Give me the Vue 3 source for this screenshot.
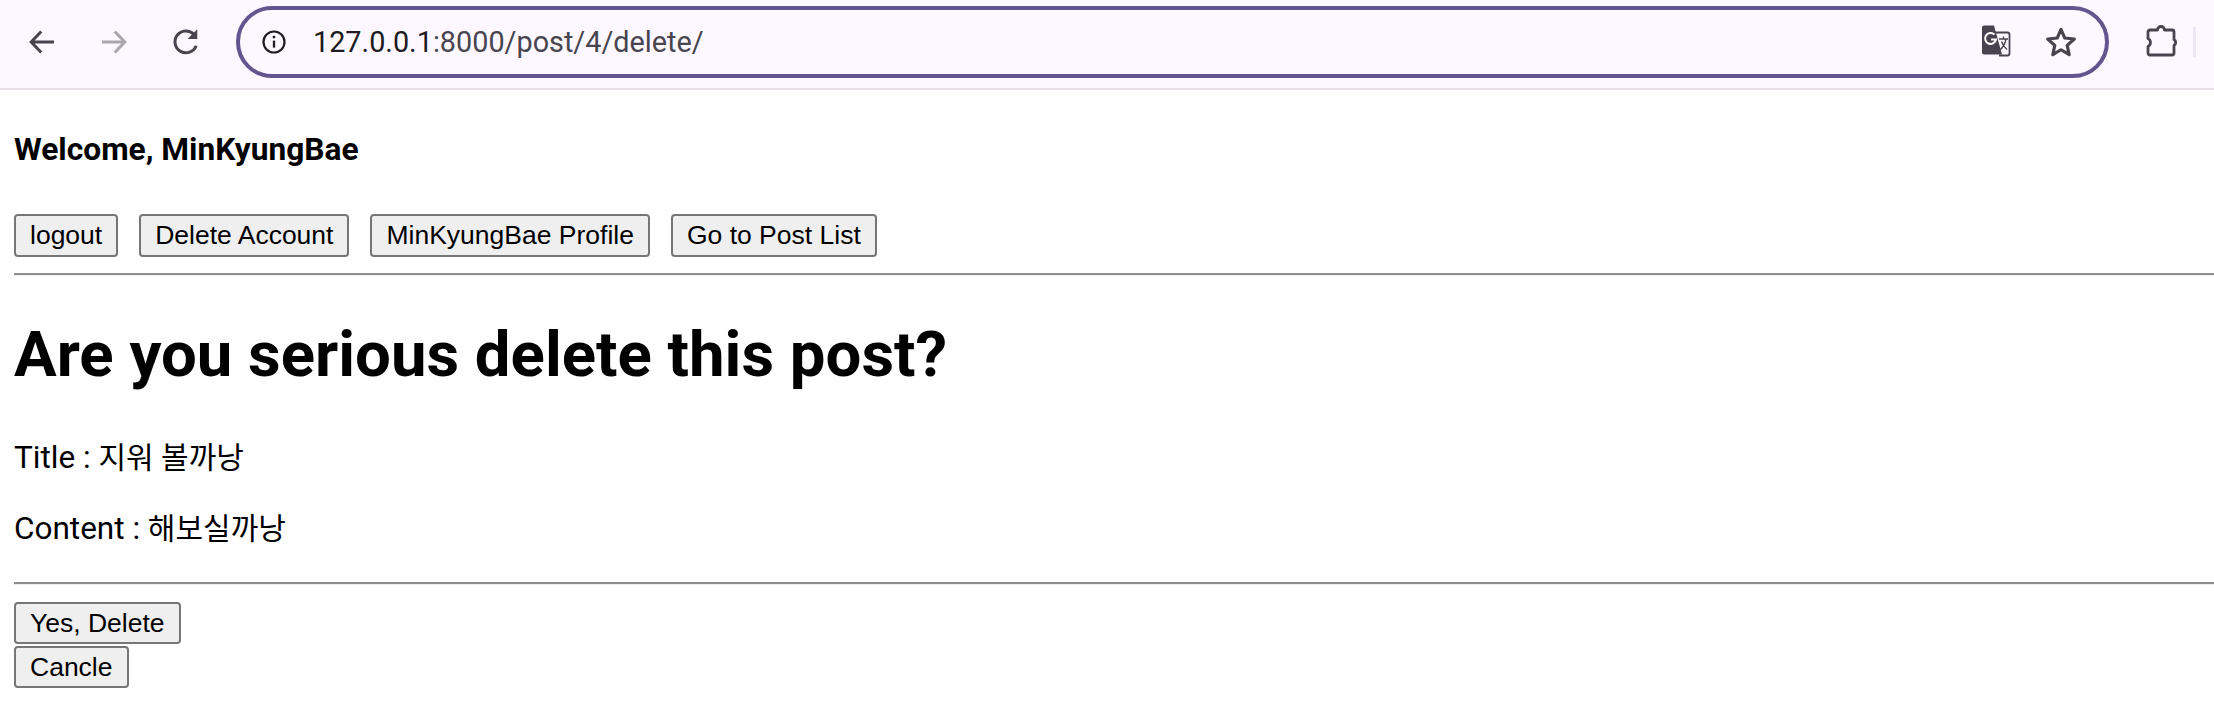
<template>
  <div class="page">
    <header class="toolbar">
      <button class="nav-btn" aria-label="Back">
        <svg width="36" height="36" viewBox="0 0 24 24"><path d="M20 12H5M11.500 5 4.800 12l6.700 7" fill="none" stroke="#47434f" stroke-width="2"/></svg>
      </button>
      <button class="nav-btn" aria-label="Forward">
        <svg width="36" height="36" viewBox="0 0 24 24"><path d="M4 12h15M12.500 5l6.700 7-6.700 7" fill="none" stroke="#a9a6ae" stroke-width="2"/></svg>
      </button>
      <button class="nav-btn" aria-label="Reload">
        <svg width="36" height="36" viewBox="0 0 24 24"><path d="M18.800 14.500A7.300 7.300 0 1 1 17.200 6.800" fill="none" stroke="#47434f" stroke-width="2"/><path d="M19.500 3.500v6.500H13z" fill="#47434f"/></svg>
      </button>
      <div class="omnibox">
        <svg class="info" width="28" height="28" viewBox="0 0 24 24"><circle cx="12" cy="12" r="9" fill="none" stroke="#1f1c26" stroke-width="1.900"/><path d="M12 10.800v6" stroke="#1f1c26" stroke-width="2"/><circle cx="12" cy="7.800" r="1.200" fill="#1f1c26"/></svg>
        <span class="url"><span class="host">127.0.0.1</span>:8000/post/4/delete/</span>
        <svg class="translate" width="36" height="36" viewBox="0 0 36 36">
          <path d="M14 8.500h14.500a2 2 0 0 1 2 2v19a2 2 0 0 1-2 2H20" fill="none" stroke="#47434f" stroke-width="1.800"/>
          <path d="M3 3.500A2 2 0 0 1 5 1.500h10l8 29H5a2 2 0 0 1-2-2z" fill="#47434f"/>
          <path d="M15.500 10.500a5.500 5.500 0 1 0 1.500 5h-5" fill="none" stroke="#fff" stroke-width="2"/>
          <path d="M20 15h9M24.500 12.500V15M27 15c-1 5-3 9-6.500 11M22.500 17.500c1 3 3 6 5.500 8" fill="none" stroke="#47434f" stroke-width="1.400"/>
        </svg>
        <svg class="star" width="38" height="38" viewBox="0 0 24 24"><path d="m12 4 2.400 5.500 6 .6-4.500 4 1.300 5.900-5.200-3.100L6.800 20l1.300-5.900-4.500-4 6-.6z" fill="none" stroke="#47434f" stroke-width="2" stroke-linejoin="round"/></svg>
      </div>
      <svg class="puzzle" width="36" height="36" viewBox="0 0 36 36"><path d="M5 8a2 2 0 0 1 2-2h7.500a3.500 3.500 0 0 1 7 0H29a2 2 0 0 1 2 2v7.500a3.500 3.500 0 0 1 0 6V29a2 2 0 0 1-2 2H7a2 2 0 0 1-2-2v-6.500a4.500 4.500 0 0 0 0-8z" fill="none" stroke="#47434f" stroke-width="2.800" stroke-linejoin="round"/></svg>
      <div class="avatar-edge"></div>
    </header>

    <main class="content">
      <h3 class="welcome">Welcome, MinKyungBae</h3>
      <div class="actions">
        <button class="btn">logout</button>
        <button class="btn">Delete Account</button>
        <button class="btn">MinKyungBae Profile</button>
        <button class="btn">Go to Post List</button>
      </div>
      <hr class="rule first" />
      <h1 class="question">Are you serious delete this post?</h1>
      <p class="line title">Title : <span class="ko">지워 볼까낭</span></p>
      <p class="line body-text">Content : <span class="ko">해보실까낭</span></p>
      <hr class="rule second" />
      <div class="confirm">
        <button class="btn">Yes, Delete</button>
        <button class="btn">Cancle</button>
      </div>
    </main>
  </div>
</template>

<script setup>
</script>

<style>
html, body {
  margin: 0;
  background: #fff;
  overflow: hidden;
}
</style>

<style scoped>
.page {
  width: 2214px;
  height: 716px;
  font-family: Roboto, "Noto Sans CJK KR", sans-serif;
  color: #000;
}

.toolbar {
  height: 88px;
  background: #fdf8ff;
  border-bottom: 2px solid #e6e0e9;
  display: flex;
  align-items: flex-start;
  padding-left: 20px;
  box-sizing: content-box;
}
.nav-btn {
  width: 44px;
  height: 44px;
  margin-top: 20px;
  margin-right: 28px;
  padding: 0;
  border: 0;
  background: none;
  display: flex;
  align-items: center;
  justify-content: center;
}

.omnibox {
  width: 1873px;
  height: 72px;
  margin-top: 6px;
  box-sizing: border-box;
  border: 4px solid #65558f;
  border-radius: 36px;
  display: flex;
  align-items: center;
  padding-left: 20px;
  padding-right: 25px;
}
.url {
  margin-left: 25px;
  font-family: Roboto, "Noto Sans", sans-serif;
  font-size: 28.800px;
  color: #49454f;
  flex: 1;
}
.host {
  color: #1d1b20;
}
.translate {
  margin-right: 27px;
}
.puzzle {
  margin-top: 24px;
  margin-left: 34px;
}
.avatar-edge {
  width: 3px;
  height: 30px;
  margin-top: 27px;
  margin-left: 14px;
  background: #ece6f6;
}

.content {
  padding-left: 14px;
}
.welcome {
  margin: 0;
  padding-top: 40px;
  font-size: 31.700px;
  line-height: 40px;
  font-weight: 700;
}
.actions {
  display: flex;
  gap: 21px;
  margin-top: 44px;
}
.btn {
  height: 43px;
  padding: 0 14px;
  box-sizing: border-box;
  border: 2px solid #767676;
  border-radius: 4px;
  background: #efefef;
  color: #000;
  font-family: "Liberation Sans", Arial, sans-serif;
  font-size: 26.500px;
  line-height: 1;
}
.rule {
  margin: 0;
  height: 0;
  border: 0;
  border-top: 2px solid #8f8f8f;
  border-bottom: 1px solid #eee;
}
.first {
  margin-top: 16px;
}
.question {
  margin: 0;
  padding-top: 43px;
  font-size: 63.500px;
  line-height: 72px;
  font-weight: 700;
}
.line {
  margin: 0;
  font-size: 31.500px;
  line-height: 40px;
}
.ko {
  font-size: 30px;
}
.title {
  margin-top: 47px;
}
.body-text {
  margin-top: 31px;
}
.second {
  margin-top: 33px;
}
.confirm {
  display: flex;
  flex-direction: column;
  align-items: flex-start;
  gap: 2px;
  margin-top: 17px;
}
.confirm .btn {
  height: 42px;
}
</style>
